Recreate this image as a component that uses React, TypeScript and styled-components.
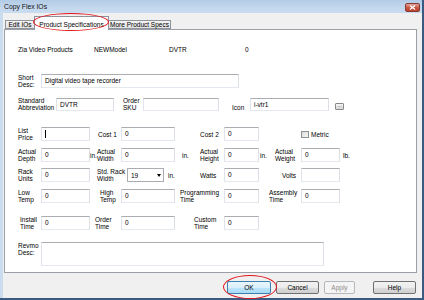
import React from "react";
import styled, { createGlobalStyle } from "styled-components";

const GlobalStyle = createGlobalStyle`
  html, body {
    margin: 0;
    padding: 0;
    background: #fff;
  }
  body {
    width: 424px;
    height: 300px;
    overflow: hidden;
    font-family: "Liberation Sans", Arial, sans-serif;
  }
`;

const Window = styled.div`
  position: relative;
  width: 424px;
  height: 300px;
  box-sizing: border-box;
  display: flex;
  flex-direction: column;
  border-right: 2px solid #3a5a82;
  border-bottom: 2px solid #3a5a82;
  font-size: 6.5px;
  color: #000;
  background: #f0f0f0;
`;

const TitleBar = styled.div`
  height: 13px;
  display: flex;
  align-items: flex-start;
  padding: 0 2px 0 4px;
  background: linear-gradient(#b3cbe6, #c4d8ee 60%, #c9dcf0);
`;

const Title = styled.span`
  font-size: 6.8px;
  line-height: 13px;
  color: #111;
`;

const CloseButton = styled.div`
  margin-left: auto;
  margin-top: 3px;
  width: 15px;
  height: 9px;
  box-sizing: border-box;
  border: 1px solid #8a3a33;
  border-radius: 2px;
  background: linear-gradient(#e2a59c, #c8553f 55%, #b8412d);
  display: flex;
  align-items: center;
  justify-content: center;
`;

const Client = styled.div`
  flex: 1;
  display: flex;
  flex-direction: column;
  border-left: 3px solid #cbdcef;
  padding: 0 5px 0 1px;
`;

const TabStrip = styled.div`
  height: 16px;
  display: flex;
  align-items: flex-end;
  padding-left: 1px;
`;

const Tab = styled.div<{ $active?: boolean; $w: number }>`
  position: relative;
  z-index: ${(p) => (p.$active ? 2 : 1)};
  width: ${(p) => p.$w}px;
  height: ${(p) => (p.$active ? 14 : 9)}px;
  margin-bottom: ${(p) => (p.$active ? -1 : 0)}px;
  box-sizing: border-box;
  border: 1px solid #8f939b;
  border-bottom: ${(p) => (p.$active ? "none" : "1px solid #8f939b")};
  margin-right: -1px;
  background: ${(p) => (p.$active ? "#fff" : "linear-gradient(#f4f4f4, #e1e1e1)")};
  display: flex;
  align-items: ${(p) => (p.$active ? "flex-start" : "center")};
  justify-content: center;
  padding-top: ${(p) => (p.$active ? 4 : 0)}px;
  line-height: 7px;
  white-space: nowrap;
`;

const Panel = styled.div`
  height: 244px;
  box-sizing: border-box;
  border: 1px solid #9a9ea6;
  background: #fff;
  padding-left: 13px;
  display: flex;
  flex-direction: column;
`;

const InfoRow = styled.div`
  display: grid;
  grid-template-columns: 76px 75px 76px 40px;
  height: 9px;
  line-height: 9px;
  margin-top: 15px;
`;

const FlexRow = styled.div<{ $mt: number; $h: number }>`
  display: flex;
  align-items: center;
  height: ${(p) => p.$h}px;
  margin-top: ${(p) => p.$mt}px;
`;

const Grid = styled.div<{ $mt: number }>`
  display: grid;
  grid-template-columns: 23px 49px 7px 24px 54px 25px 24px 35px 10px 32px 39px 12px;
  height: 14px;
  margin-top: ${(p) => p.$mt}px;
  align-items: center;
`;

const Label = styled.div<{ $col?: string; $w?: number; $pad?: number; $right?: boolean; $self?: string }>`
  grid-column: ${(p) => p.$col ?? "auto"};
  width: ${(p) => (p.$w ? `${p.$w}px` : "auto")};
  flex: none;
  box-sizing: border-box;
  padding-left: ${(p) => p.$pad ?? 0}px;
  padding-right: ${(p) => (p.$right ? 5 : 0)}px;
  text-align: ${(p) => (p.$right ? "right" : "left")};
  align-self: ${(p) => p.$self ?? "center"};
  line-height: 7px;
  white-space: nowrap;
`;

const Field = styled.div<{ $col?: string; $w?: number; $h?: number }>`
  grid-column: ${(p) => p.$col ?? "auto"};
  width: ${(p) => (p.$w ? `${p.$w}px` : "auto")};
  height: ${(p) => p.$h ?? 14}px;
  flex: none;
  box-sizing: border-box;
  border: 1px solid;
  border-color: #abadb3 #dbdfe6 #e3e9ef #e2e3ea;
  background: #fff;
  padding: 2px 0 0 3px;
  line-height: 7px;
  white-space: nowrap;
  overflow: hidden;
`;

const Caret = styled.span`
  display: inline-block;
  width: 1px;
  height: 8px;
  background: #000;
`;

const Unit = styled.div<{ $col: string; $pad?: number }>`
  grid-column: ${(p) => p.$col};
  padding-left: ${(p) => p.$pad ?? 0}px;
  align-self: end;
  padding-bottom: 3px;
  line-height: 7px;
`;

const SelectCell = styled.div`
  grid-column: 5;
  display: flex;
  align-items: center;
  padding-left: 6px;
`;

const Select = styled.div`
  width: 37px;
  height: 14px;
  box-sizing: border-box;
  border: 1px solid #abadb3;
  background: #fff;
  display: flex;
  align-items: center;
  padding: 0 2px 0 3px;
  line-height: 7px;
`;

const Arrow = styled.span`
  margin-left: auto;
  width: 0;
  height: 0;
  border-left: 2.5px solid transparent;
  border-right: 2.5px solid transparent;
  border-top: 3px solid #000;
`;

const CheckCell = styled.div`
  grid-column: 11 / 13;
  display: flex;
  align-items: center;
  gap: 2px;
  line-height: 7px;
`;

const CheckBox = styled.span`
  width: 8px;
  height: 7px;
  box-sizing: border-box;
  border: 1px solid #8f8f8f;
  background: linear-gradient(135deg, #dcdcdc, #f6f6f6);
`;

const BrowseButton = styled.div`
  width: 9px;
  height: 7px;
  margin-left: 6px;
  align-self: flex-end;
  margin-bottom: 1px;
  box-sizing: border-box;
  border: 1px solid #8a8a8a;
  border-radius: 1px;
  background: linear-gradient(#f6f6f6, #d8d8d8);
  font-size: 5px;
  line-height: 3px;
  text-align: center;
  color: #333;
`;

const Footer = styled.div`
  flex: 1;
  display: flex;
  align-items: flex-start;
  padding: 8px 0 0 223px;
  gap: 5px;
`;

const Button = styled.div<{ $w: number; $kind?: "default" | "disabled"; $ml?: number }>`
  width: ${(p) => p.$w}px;
  height: 13px;
  margin-left: ${(p) => p.$ml ?? 0}px;
  box-sizing: border-box;
  border: 1px solid
    ${(p) => (p.$kind === "default" ? "#3c7fb1" : p.$kind === "disabled" ? "#b5b9bc" : "#707070")};
  border-radius: 2px;
  background: ${(p) =>
    p.$kind === "default"
      ? "linear-gradient(#eaf6fd, #d9f0fc 50%, #bee6fd 51%, #a7d9f5)"
      : p.$kind === "disabled"
      ? "#f4f4f4"
      : "linear-gradient(#f2f2f2, #ebebeb 50%, #dddddd 51%, #cfcfcf)"};
  color: ${(p) => (p.$kind === "disabled" ? "#8d8d8d" : "#000")};
  display: flex;
  align-items: center;
  justify-content: center;
  line-height: 7px;
`;

const Ring = styled.div<{ $x: number; $y: number; $w: number; $h: number }>`
  position: absolute;
  left: ${(p) => p.$x}px;
  top: ${(p) => p.$y}px;
  width: ${(p) => p.$w}px;
  height: ${(p) => p.$h}px;
  box-sizing: border-box;
  border: 1.5px solid #e2141c;
  border-radius: 50%;
  pointer-events: none;
  z-index: 5;
`;

export default function App() {
  return (
    <>
      <GlobalStyle />
      <Window>
        <TitleBar>
          <Title>Copy Flex IOs</Title>
          <CloseButton>
            <svg width="7" height="5" viewBox="0 0 7 5">
              <path d="M1 0.5 L6 4.5 M6 0.5 L1 4.5" stroke="#fff" strokeWidth="1.3" />
            </svg>
          </CloseButton>
        </TitleBar>
        <Client>
          <TabStrip>
            <Tab $w={30}>Edit IOs</Tab>
            <Tab $w={75} $active>
              Product Specifications
            </Tab>
            <Tab $w={63}>More Product Specs</Tab>
          </TabStrip>
          <Panel>
            <InfoRow>
              <span>Zia Video Products</span>
              <span>NEWModel</span>
              <span>DVTR</span>
              <span>0</span>
            </InfoRow>

            <FlexRow $mt={20} $h={14}>
              <Label $w={23}>
                Short
                <br />
                Desc:
              </Label>
              <Field $w={198}>Digital video tape recorder</Field>
            </FlexRow>

            <FlexRow $mt={10} $h={13}>
              <Label $w={38} $self="flex-end">
                Standard
                <br />
                Abbreviation
              </Label>
              <Field $w={58} $h={13}>
                DVTR
              </Field>
              <Label $w={29} $pad={9} $self="flex-end">
                Order
                <br />
                SKU
              </Label>
              <Field $w={76} $h={13} />
              <Label $w={31} $pad={13} $self="flex-end">
                Icon
              </Label>
              <Field $w={79} $h={13}>
                i-vtr1
              </Field>
              <BrowseButton>...</BrowseButton>
            </FlexRow>

            <Grid $mt={16}>
              <Label $col="1">
                List
                <br />
                Price
              </Label>
              <Field $col="2">
                <Caret />
              </Field>
              <Label $col="4" $pad={1}>
                Cost 1
              </Label>
              <Field $col="5">0</Field>
              <Label $col="7">Cost 2</Label>
              <Field $col="8">0</Field>
              <CheckCell>
                <CheckBox />
                Metric
              </CheckCell>
            </Grid>

            <Grid $mt={7}>
              <Label $col="1">
                Actual
                <br />
                Depth
              </Label>
              <Field $col="2">0</Field>
              <Unit $col="3" $pad={0}>
                in.
              </Unit>
              <Label $col="4">
                Actual
                <br />
                Width
              </Label>
              <Field $col="5">0</Field>
              <Unit $col="6" $pad={7}>
                in.
              </Unit>
              <Label $col="7">
                Actual
                <br />
                Height
              </Label>
              <Field $col="8">0</Field>
              <Unit $col="9" $pad={1}>
                in.
              </Unit>
              <Label $col="10" $pad={6}>
                Actual
                <br />
                Weight
              </Label>
              <Field $col="11">0</Field>
              <Unit $col="12" $pad={3}>
                lb.
              </Unit>
            </Grid>

            <Grid $mt={6}>
              <Label $col="1">
                Rack
                <br />
                Units
              </Label>
              <Field $col="2">0</Field>
              <Label $col="4">
                Std. Rack
                <br />
                Width
              </Label>
              <SelectCell>
                <Select>
                  19
                  <Arrow />
                </Select>
                <Label $pad={4}>in.</Label>
              </SelectCell>
              <Label $col="7">Watts</Label>
              <Field $col="8">0</Field>
              <Label $col="10" $right>
                Volts
              </Label>
              <Field $col="11" />
            </Grid>

            <Grid $mt={7}>
              <Label $col="1">
                Low
                <br />
                Temp
              </Label>
              <Field $col="2">0</Field>
              <Label $col="4" $pad={3}>
                High
                <br />
                Temp
              </Label>
              <Field $col="5">0</Field>
              <Label $col="6 / 8" $pad={5}>
                Programming
                <br />
                Time
              </Label>
              <Field $col="8">0</Field>
              <Label $col="10">
                Assembly
                <br />
                Time
              </Label>
              <Field $col="11">0</Field>
            </Grid>

            <Grid $mt={13}>
              <Label $col="1" $pad={2}>
                Install
                <br />
                Time
              </Label>
              <Field $col="2">0</Field>
              <Label $col="3 / 5" $pad={5}>
                Order
                <br />
                Time
              </Label>
              <Field $col="5">0</Field>
              <Label $col="6 / 8" $pad={19}>
                Custom
                <br />
                Time
              </Label>
              <Field $col="8">0</Field>
            </Grid>

            <FlexRow $mt={12} $h={24}>
              <Label $w={23} $self="flex-start">
                Revmo
                <br />
                Desc:
              </Label>
              <Field $w={283} $h={24} />
            </FlexRow>
          </Panel>
          <Footer>
            <Button $w={44} $kind="default">
              OK
            </Button>
            <Button $w={43}>Cancel</Button>
            <Button $w={31} $kind="disabled">
              Apply
            </Button>
            <Button $w={43} $ml={13}>
              Help
            </Button>
          </Footer>
        </Client>
        <Ring $x={33} $y={13} $w={76} $h={18} />
        <Ring $x={223} $y={275} $w={54} $h={24} />
      </Window>
    </>
  );
}
